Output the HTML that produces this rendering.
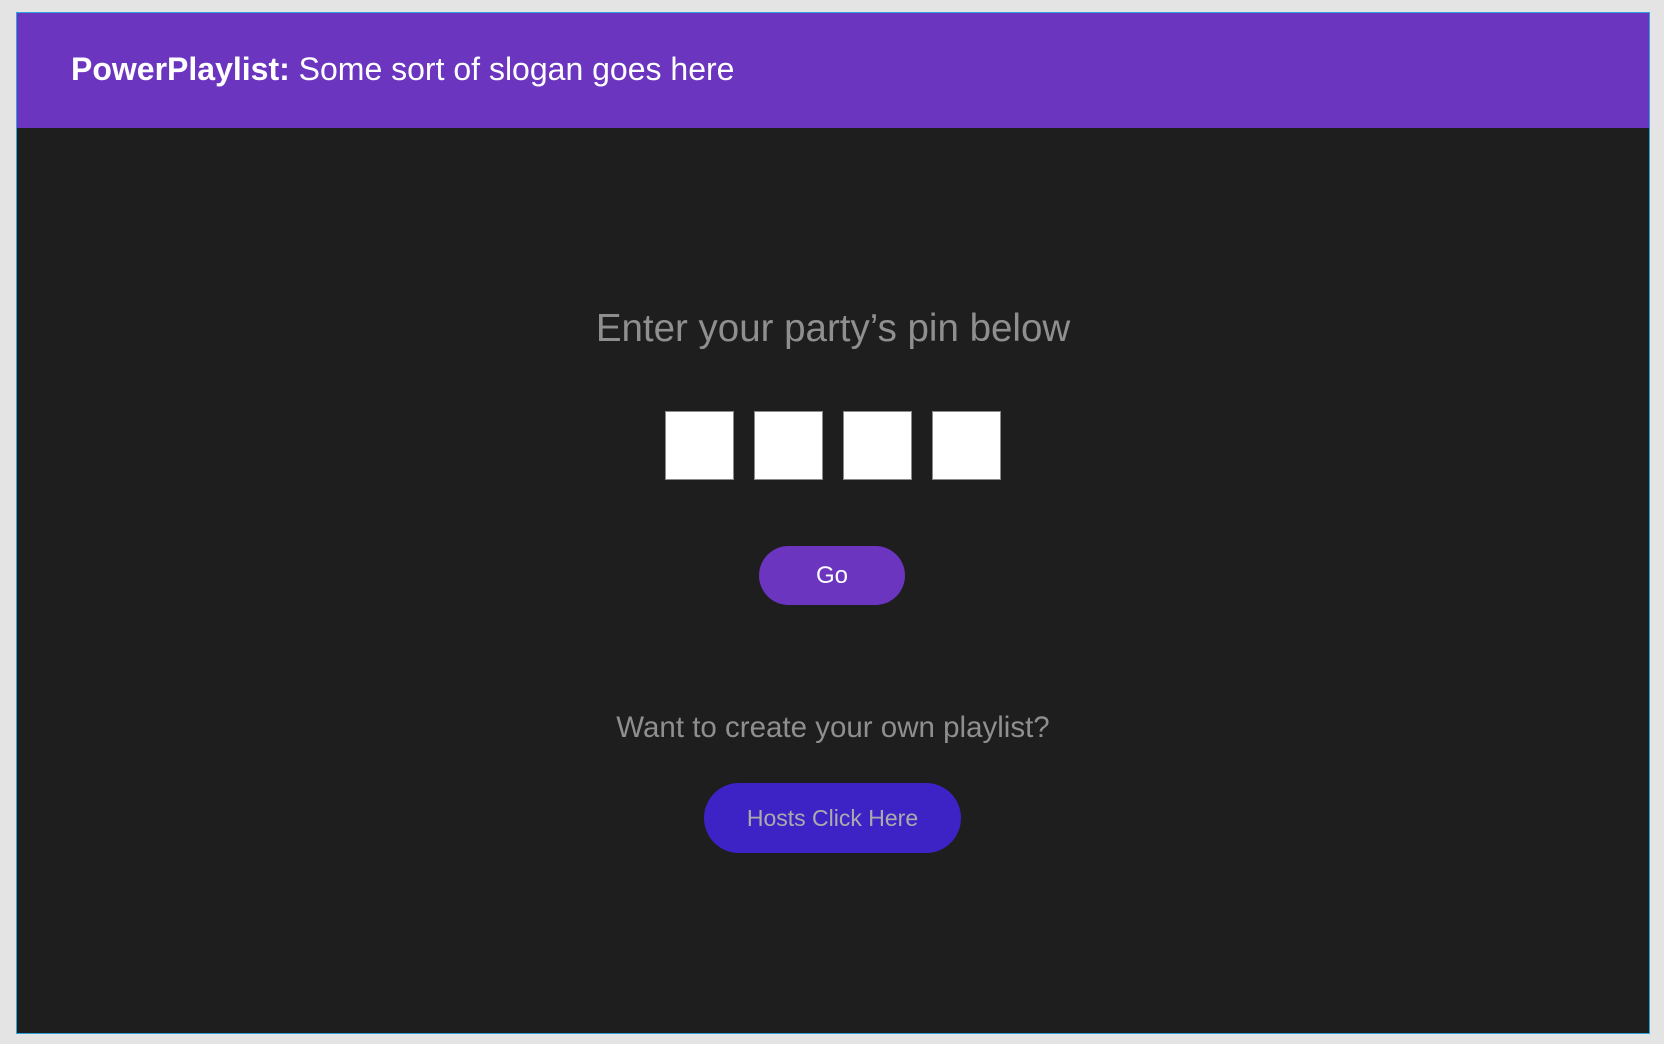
<!DOCTYPE html>
<html><head><meta charset="utf-8"><style>
html,body{margin:0;padding:0;}
body{width:1664px;height:1044px;background:#e4e4e4;position:relative;overflow:hidden;font-family:"Liberation Sans",Arial,sans-serif;}
.frame{position:absolute;left:16px;top:12px;width:1632px;height:1020px;background:#1e1e1e;border:1px solid #2ea3dc;}
.hdr{position:absolute;left:0;top:0;width:1632px;height:115px;background:#6c35c0;}
.hdr div{position:absolute;left:54px;top:38px;font-size:32px;color:#fff;white-space:nowrap;}
.t{position:absolute;left:0;width:1632px;text-align:center;color:#8f8f8f;}
.box{position:absolute;top:398px;width:67px;height:67px;background:#fff;border:1px solid #8a8a8a;}
.btn{position:absolute;border-radius:40px;text-align:center;}
</style></head><body>
<div class="frame">
<div class="hdr"><div><b>PowerPlaylist:</b> Some sort of slogan goes here</div></div>
<div class="t" style="top:294px;font-size:38.5px;">Enter your party’s pin below</div>
<div class="box" style="left:648px"></div>
<div class="box" style="left:737px"></div>
<div class="box" style="left:826px"></div>
<div class="box" style="left:915px"></div>
<div class="btn" style="left:742px;top:533px;width:146px;height:59px;line-height:59px;background:#6b35bf;color:#fff;font-size:24px;">Go</div>
<div class="t" style="top:698px;font-size:29.5px;">Want to create your own playlist?</div>
<div class="btn" style="left:687px;top:770px;width:257px;height:70px;line-height:70px;background:#3d23c6;color:#ababab;font-size:23px;">Hosts Click Here</div>
</div>
</body></html>
